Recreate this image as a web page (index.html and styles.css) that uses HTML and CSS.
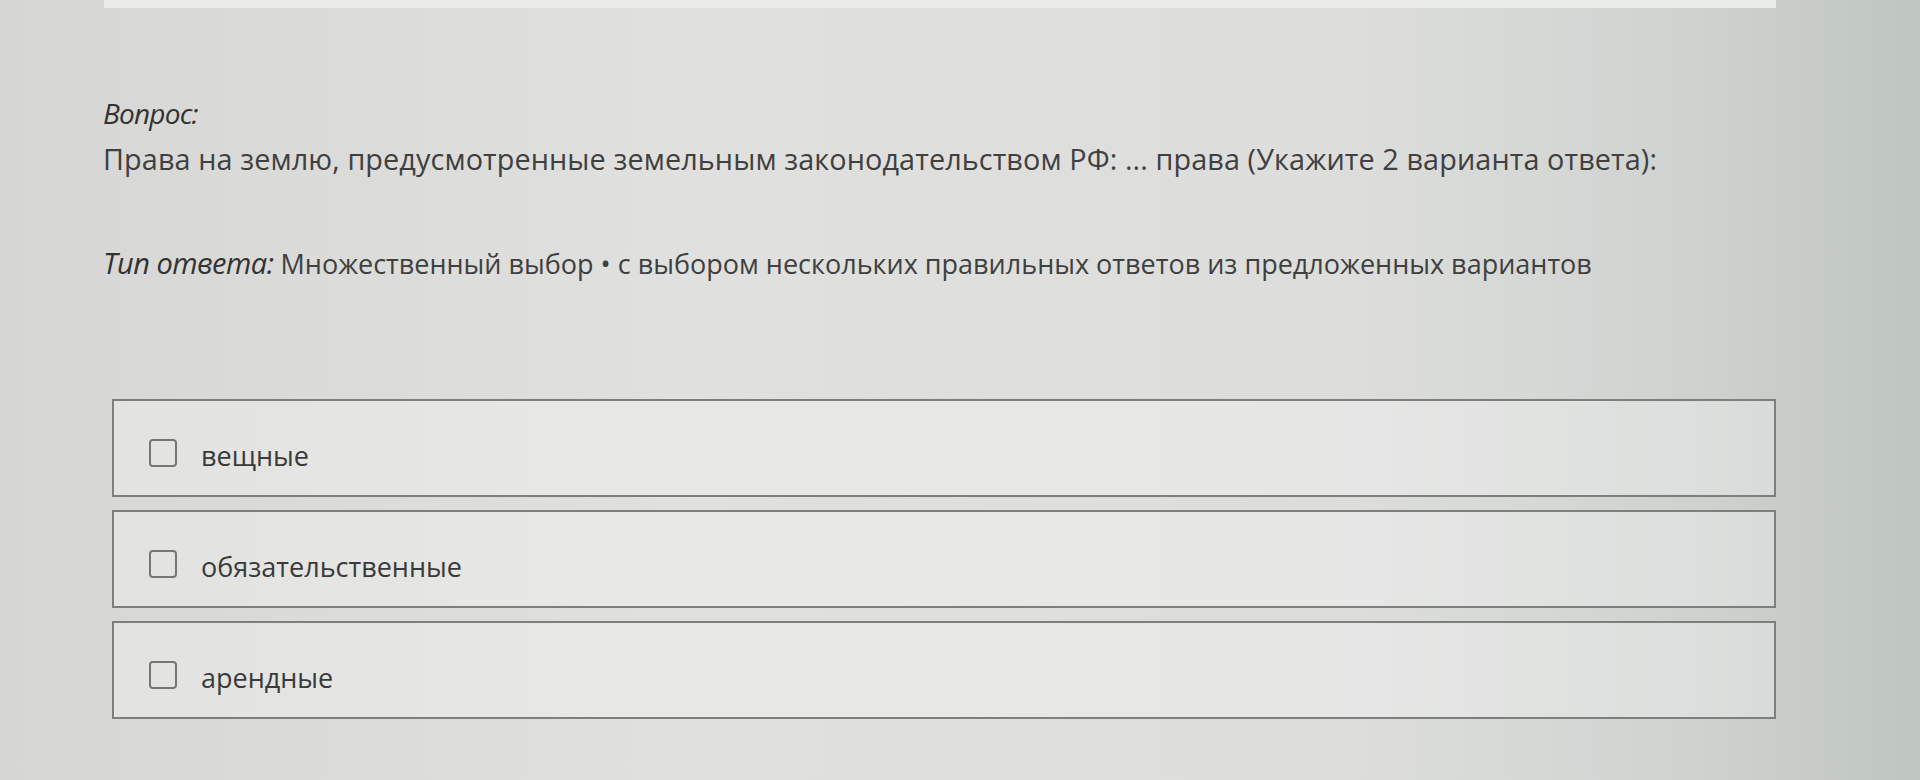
FILE: index.html
```html
<!DOCTYPE html>
<html lang="ru">
<head>
<meta charset="utf-8">
<title>Вопрос</title>
<link rel="stylesheet" href="styles.css">
</head>
<body>
<div class="topbar"></div>
<main class="question">
  <div class="label">Вопрос:</div>
  <p class="text">Права на землю, предусмотренные земельным законодательством РФ: ... права (Укажите 2 варианта ответа):</p>
  <p class="type"><em class="type-label">Тип ответа:</em> Множественный выбор • с выбором нескольких правильных ответов из предложенных вариантов</p>
  <div class="options">
    <label class="option"><span class="box"></span><span class="option-text">вещные</span></label>
    <label class="option"><span class="box"></span><span class="option-text">обязательственные</span></label>
    <label class="option"><span class="box"></span><span class="option-text">арендные</span></label>
  </div>
</main>
</body>
</html>
```
FILE: styles.css
```css
html, body {
  margin: 0;
  height: 100%;
}
body {
  background: linear-gradient(90deg, #d6d6d4 0%, #e0e0de 35%, #dddedc 70%, #cfd3d0 88%, #bfc5c1 100%);
  font-family: "Open Sans", "Noto Sans", sans-serif;
  color: #404040;
  overflow: hidden;
}
.topbar {
  margin-left: 104px;
  width: 1672px;
  height: 8px;
  background: #eaeae8;
}
.question {
  padding: 0 0 0 103px;
}
.label {
  margin-top: 90px;
  font-style: italic;
  font-size: 28px;
  line-height: 30px;
  letter-spacing: -0.8px;
  color: #333;
}
.text {
  margin: 14px 0 0;
  font-size: 28.8px;
  line-height: 34px;
  letter-spacing: 0.1px;
}
.type {
  margin: 70px 0 0;
  font-size: 27px;
  line-height: 34px;
}
.type-label {
  font-style: italic;
  font-size: 29px;
  letter-spacing: -0.5px;
  color: #333;
}
.options {
  margin: 118px 0 0 9px;
  width: 1664px;
  display: flex;
  flex-direction: column;
  gap: 13px;
}
.option {
  display: flex;
  align-items: center;
  height: 98px;
  box-sizing: border-box;
  border: 2px solid #7d7f7d;
  background: rgba(255, 255, 255, 0.28);
  padding: 10px 0 0 35px;
}
.box {
  width: 28px;
  height: 28px;
  box-sizing: border-box;
  border: 2px solid #767676;
  border-radius: 4px;
  flex: none;
}
.option-text {
  margin-left: 24px;
  padding-top: 4px;
  font-size: 27px;
  color: #3a3a3a;
}
```
